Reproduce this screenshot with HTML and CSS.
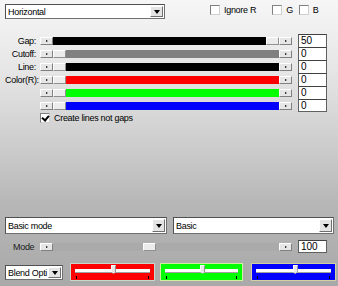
FILE: index.html
```html
<!DOCTYPE html>
<html lang="en">
<head>
  <meta charset="UTF-8" /><meta name="viewport" content="width=device-width, initial-scale=1.0" />
  <title>Lines filter</title>
  <link rel="stylesheet" href="styles.css">
</head>
<body>
  <div class="top">
    <div class="combo main"><span>Horizontal</span><b class="arrow"></b></div>
    <label class="chk ignore"><i class="box"></i>Ignore R</label>
    <label class="chk g"><i class="box"></i>G</label>
    <label class="chk b"><i class="box"></i>B</label>
  </div>

  <div class="grid">
    <span class="lbl">Gap:</span>
    <div class="sl"><b class="btn"></b><div class="track end" style="background:#000"><i class="thumb"></i></div><b class="btn"></b></div>
    <span class="num first">50</span>

    <span class="lbl">Cutoff:</span>
    <div class="sl"><b class="btn"></b><div class="track" style="background:#808080"><i class="thumb"></i></div><b class="btn"></b></div>
    <span class="num">0</span>

    <span class="lbl">Line:</span>
    <div class="sl"><b class="btn"></b><div class="track" style="background:#000"><i class="thumb"></i></div><b class="btn"></b></div>
    <span class="num">0</span>

    <span class="lbl">Color(R):</span>
    <div class="sl"><b class="btn"></b><div class="track" style="background:#ff0000"><i class="thumb"></i></div><b class="btn"></b></div>
    <span class="num">0</span>

    <span class="lbl"></span>
    <div class="sl"><b class="btn"></b><div class="track" style="background:#00ff00"><i class="thumb"></i></div><b class="btn"></b></div>
    <span class="num">0</span>

    <span class="lbl"></span>
    <div class="sl"><b class="btn"></b><div class="track" style="background:#0000ff"><i class="thumb"></i></div><b class="btn"></b></div>
    <span class="num">0</span>
  </div>

  <label class="chk create"><i class="box checked"></i>Create lines not gaps</label>

  <div class="modes">
    <div class="combo wide"><span>Basic mode</span><b class="arrow"></b></div>
    <div class="combo wide2"><span>Basic</span><b class="arrow"></b></div>
  </div>

  <div class="moderow">
    <span class="mlbl">Mode</span>
    <div class="sl"><b class="btn"></b><div class="track flat"><i class="thumb" style="margin-left:90px"></i></div><b class="btn hidden"></b></div>
    <span class="num">100</span>
  </div>

  <div class="bottom">
    <div class="combo blend"><span>Blend Opti</span><b class="arrow"></b></div>
    <div class="panel red"><div class="mini"><i class="knob" style="left:48%"></i></div><div class="ticks"><i></i><i></i></div></div>
    <div class="panel green"><div class="mini"><i class="knob" style="left:48%"></i></div><div class="ticks"><i></i><i></i></div></div>
    <div class="panel blue"><div class="mini"><i class="knob" style="left:49%"></i></div><div class="ticks"><i></i><i></i></div></div>
  </div>
</body>
</html>
```

FILE: styles.css
```css
body { margin: 0; width: 338px; height: 286px; overflow: hidden; font-family: "Liberation Sans", Arial, sans-serif; font-size: 9px; letter-spacing: -0.3px; color: #000; background: linear-gradient(#f6f6f6 0, #e6e6e6 70px, #cbcbcb 150px, #b6b6b6 205px, #a9a9a9 286px); }

.top { display: flex; align-items: flex-start; height: 19px; padding: 4px 0 0 5px; box-sizing: border-box; }
.combo { display: flex; align-items: center; background: #fff; border: 1px solid #707070; border-top-color: #505050; border-left-color: #505050; box-sizing: border-box; padding-left: 2px; }
.combo span { flex: 1; white-space: nowrap; overflow: hidden; }
.combo .arrow { width: 13px; height: calc(100% - 2px); margin-right: 1px; background: #e4e4e4; border: 1px solid #fff; border-right-color: #707070; border-bottom-color: #707070; box-sizing: border-box; display: flex; align-items: center; justify-content: center; }
.combo .arrow::after { content: ""; border: 3px solid transparent; border-top: 4px solid #000; border-bottom: 0; }
.main { width: 160px; height: 15px; }

.chk { display: flex; align-items: center; gap: 4px; }
.box { width: 10px; height: 10px; box-sizing: border-box; border: 1px solid #808080; border-right-color: #d0d0d0; border-bottom-color: #d0d0d0; background: #fff; position: relative; }
.box.checked::after { content: ""; position: absolute; left: 2px; top: 0; width: 3px; height: 5px; border: solid #000; border-width: 0 2px 2px 0; transform: rotate(40deg); }
.ignore { margin: 1px 0 0 45px; }
.g { margin: 1px 0 0 16px; }
.b { margin: 1px 0 0 6px; }

.grid { display: grid; grid-template-columns: 35px 252px 6px 29px; grid-auto-rows: 13px; margin-top: 15px; padding-left: 5px; align-items: center; }
.lbl { text-align: right; padding-right: 4px; }
.sl { display: flex; height: 8px; }
.btn { width: 13px; background: #e6e6e6; border: 1px solid #fff; border-right-color: #808080; border-bottom-color: #808080; box-sizing: border-box; display: flex; align-items: center; justify-content: center; }
.btn::after { content: ""; border: 1.5px solid transparent; border-left: 2px solid #000; border-right: 0; }
.btn.hidden { visibility: visible; }
.track { flex: 1; display: flex; }
.track.end { justify-content: flex-end; }
.thumb { width: 13px; background: #ececec; border: 1px solid #fff; border-right-color: #909090; border-bottom-color: #909090; box-sizing: border-box; }
.track.flat { background: #aaaaaa; }
.num { grid-column: 4; height: 13px; background: #fff; border: 1px solid #606060; border-top-color: #404040; border-bottom-width: 0; box-sizing: border-box; padding-left: 2px; font-size: 10px; line-height: 12px; letter-spacing: 0; }
.grid .num:last-child { border-bottom-width: 1px; }

.create { margin: 1px 0 0 40px; }

.modes { display: flex; gap: 6px; margin-top: 94px; padding-left: 5px; }
.wide { width: 162px; height: 17px; }
.wide2 { width: 161px; height: 17px; }

.moderow { display: flex; align-items: center; height: 13px; margin-top: 6px; padding-left: 13px; }
.mlbl { width: 27px; color: #202020; }
.moderow .sl { width: 252px; }
.moderow .num { margin-left: 6px; width: 29px; border-bottom-width: 1px; }

.bottom { display: flex; margin-top: 10px; padding-left: 5px; align-items: flex-start; }
.blend { width: 58px; height: 15px; margin-top: 2px; }
.panel { height: 18px; box-sizing: border-box; border: 1px solid #c8d8c8; padding: 3px 4px 0; }
.red { width: 85px; margin-left: 7px; background: #ff0000; }
.green { width: 83px; margin-left: 5px; background: #00ff00; border-color: #d0f0a0; }
.blue { width: 85px; margin-left: 8px; background: #0000ff; border-color: #d0d0a0; }
.mini { position: relative; height: 3px; margin-top: 2px; background: #fff; border-bottom: 1px solid #a0a0a0; }
.knob { position: absolute; top: -4px; width: 5px; height: 9px; background: #e8e8e8; border: 1px solid #909090; border-top-color: #fff; border-left-color: #fff; box-sizing: border-box; clip-path: polygon(0 0, 100% 0, 100% 70%, 50% 100%, 0 70%); }
.ticks { display: flex; justify-content: space-between; margin-top: 3px; padding: 0 1px; }
.ticks i { width: 1px; height: 3px; background: #000; }
```
